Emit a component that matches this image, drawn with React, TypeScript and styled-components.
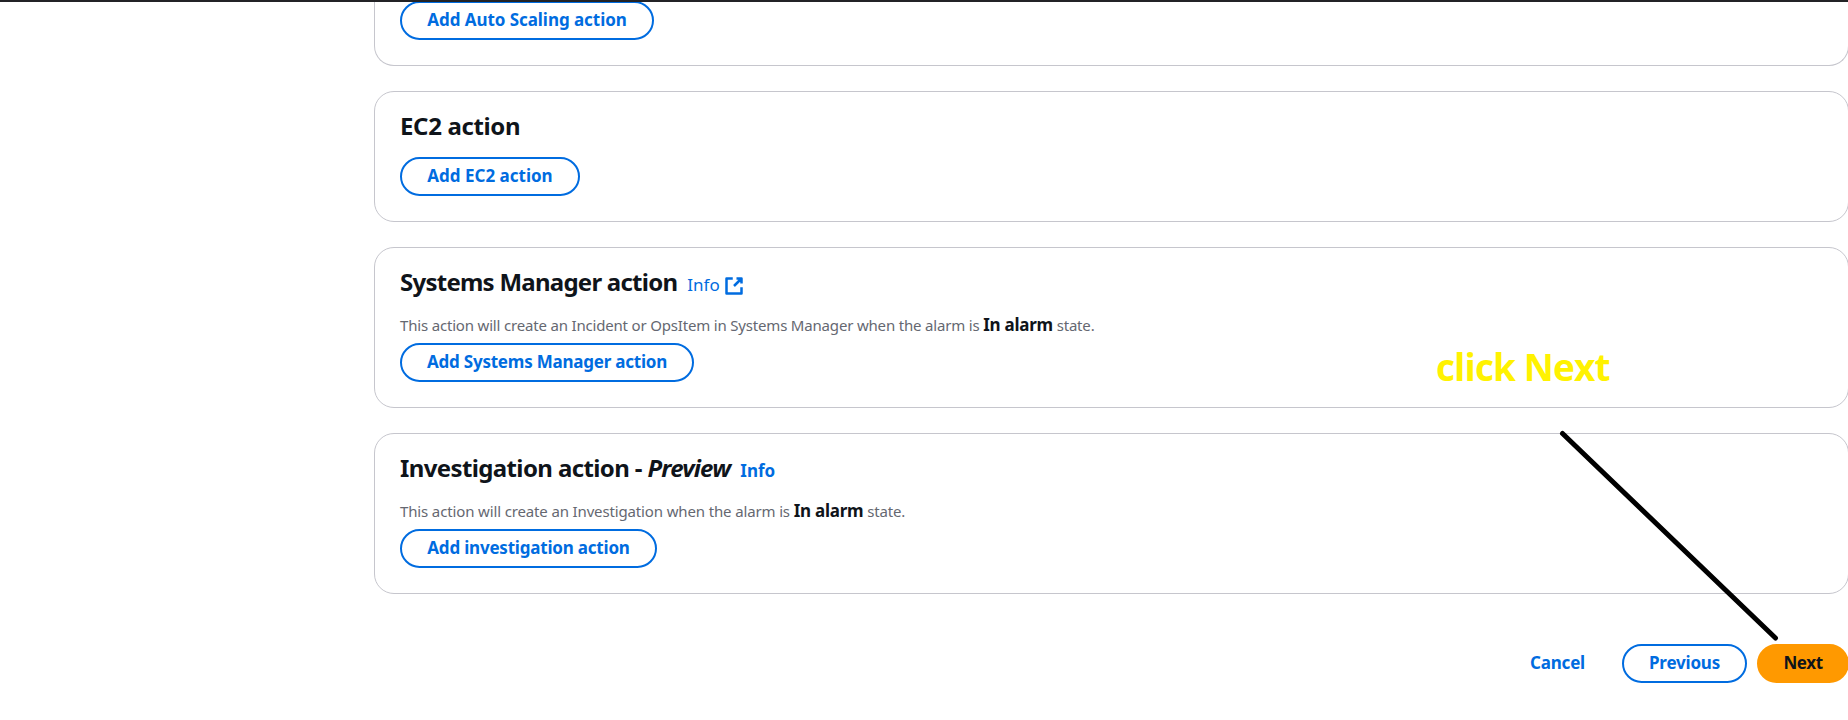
import React from 'react';
import styled, { createGlobalStyle, css } from 'styled-components';

const BLUE = '#006ce0';
const INK = '#0f141a';

const Global = createGlobalStyle`
  body { margin: 0; background: #fff; }
  * { box-sizing: border-box; }
`;

const Page = styled.div`
  position: relative;
  height: 720px;
  overflow: hidden;
  background: #fff;
  font-family: 'Noto Sans', sans-serif;
  color: ${INK};
`;

const TopEdge = styled.div`
  position: relative;
  z-index: 1;
  height: 2px;
  background: #232326;
`;

const Content = styled.main`
  width: 1475px;
  margin-left: 374px;
  display: flex;
  flex-direction: column;
  gap: 25px;
`;

const Card = styled.section<{ $cut?: boolean }>`
  display: flex;
  flex-direction: column;
  align-items: flex-start;
  border: 1px solid #c6c6cd;
  border-radius: 20px;
  padding: 19px 25px 25px;
  ${(p) =>
    p.$cut &&
    css`
      border-top: 0;
      border-top-left-radius: 0;
      border-top-right-radius: 0;
      padding-top: 0;
      & > button {
        margin-top: -1px;
      }
    `}
`;

const Heading = styled.h2<{ $track: number }>`
  margin: 0;
  height: 30px;
  display: flex;
  align-items: baseline;
  font-size: 24px;
  line-height: 30px;
  font-weight: 700;
  letter-spacing: ${(p) => p.$track}px;
  white-space: pre;
`;

const Preview = styled.em`
  letter-spacing: -0.8px;
`;

const InfoLink = styled.a<{ $bold?: boolean }>`
  display: inline-flex;
  align-items: center;
  gap: 4px;
  margin-left: 10px;
  color: ${BLUE};
  font-size: 17px;
  line-height: 25px;
  letter-spacing: 0;
  font-weight: ${(p) => (p.$bold ? 700 : 400)};

  svg {
    margin-top: 2px;
  }
`;

const Description = styled.p<{ $track: number }>`
  margin: 15px 0 -10px;
  height: 25px;
  color: #656871;
  font-size: 15px;
  line-height: 25px;
  letter-spacing: ${(p) => p.$track}px;
  white-space: nowrap;

  strong {
    color: ${INK};
    font-size: 17px;
    font-weight: 700;
    letter-spacing: -0.25px;
  }
`;

const Button = styled.button<{ $width: number; $track?: number; $kind?: 'link' | 'primary' }>`
  width: ${(p) => p.$width}px;
  height: 39px;
  margin: 0;
  padding: 0 0 2px;
  border: 2px solid ${BLUE};
  border-radius: 20px;
  background: #fff;
  color: ${BLUE};
  font: 700 17px/25px 'Noto Sans', sans-serif;
  letter-spacing: ${(p) => p.$track ?? 0}px;
  white-space: nowrap;

  ${Heading} + &,
  ${Description} + & {
    margin-top: 16px;
  }
  ${(p) => p.$kind === 'link' && css`border-color: transparent; background: transparent;`}
  ${(p) => p.$kind === 'primary' && css`border-color: #ff9900; background: #ff9900; color: ${INK};`}
`;

const Footer = styled.footer`
  display: flex;
  justify-content: flex-end;
  gap: 10px;
  margin-top: 25px;
`;

const Note = styled.div`
  position: absolute;
  left: 1436px;
  top: 342px;
  font: 700 37px/50px 'Open Sans', sans-serif;
  letter-spacing: -0.9px;
  color: #fff200;
  white-space: nowrap;
`;

const Pointer = styled.svg`
  position: absolute;
  left: 1550px;
  top: 425px;
`;

const ExternalIcon = () => (
  <svg width="20" height="20" viewBox="0 0 16 16" fill="none" stroke={BLUE} strokeWidth="2" strokeLinejoin="round">
    <path d="M14 9.05V14H2V2h5M10 2h4v4M8 8l6-6" />
  </svg>
);

export default function App() {
  return (
    <Page>
      <Global />
      <TopEdge />
      <Content>
        <Card $cut>
          <Button $width={254} $track={-0.05}>Add Auto Scaling action</Button>
        </Card>
        <Card>
          <Heading $track={-0.36}>EC2 action</Heading>
          <Button $width={180}>Add EC2 action</Button>
        </Card>
        <Card>
          <Heading $track={-0.75}>
            Systems Manager action
            <InfoLink>
              Info
              <ExternalIcon />
            </InfoLink>
          </Heading>
          <Description $track={-0.18}>
            This action will create an Incident or OpsItem in Systems Manager when the alarm is{' '}
            <strong>In alarm</strong> state.
          </Description>
          <Button $width={294} $track={-0.22}>Add Systems Manager action</Button>
        </Card>
        <Card>
          <Heading $track={-0.62}>
            {'Investigation action - '}
            <Preview>Preview</Preview>
            <InfoLink $bold>Info</InfoLink>
          </Heading>
          <Description $track={-0.14}>
            This action will create an Investigation when the alarm is <strong>In alarm</strong> state.
          </Description>
          <Button $width={257} $track={-0.2}>Add investigation action</Button>
        </Card>
        <Footer>
          <Button $width={109} $track={-0.2} $kind="link">Cancel</Button>
          <Button $width={125} $track={-0.2}>Previous</Button>
          <Button $width={92} $track={-0.4} $kind="primary">Next</Button>
        </Footer>
      </Content>
      <Note>click Next</Note>
      <Pointer width="240" height="225" fill="none" stroke="#000" strokeWidth="5" strokeLinecap="round">
        <path d="M12.5 8.5L225.5 213" />
      </Pointer>
    </Page>
  );
}
